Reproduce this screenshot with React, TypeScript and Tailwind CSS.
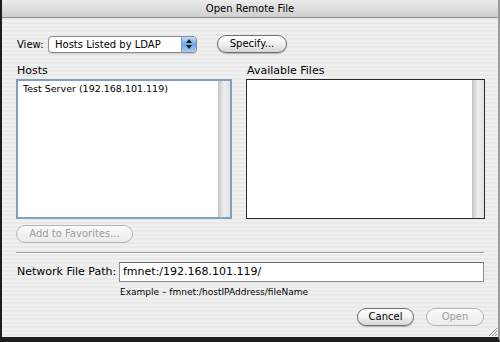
import React from "react";

const font = { fontFamily: '"DejaVu Sans", "Liberation Sans", sans-serif' };

type AquaButtonProps = {
    label: string;
    width: string;
    disabled?: boolean;
};

const AquaButton = ({ label, width, disabled }: AquaButtonProps) => (
    <button
        className={
            disabled
                ? `${width} h-[18px] block rounded-full border border-[#b4b4b4] bg-gradient-to-b from-[#fbfbfb] to-[#ebebeb] text-[10px] text-[#9c9c9c] leading-none`
                : `${width} h-[18px] block rounded-full border border-[#6e6e6e] bg-gradient-to-b from-[#ffffff] via-[#f1f1f1] to-[#d6d6d6] text-[10px] text-black leading-none shadow-[0_1px_1px_rgba(0,0,0,0.25)]`
        }
    >
        {label}
    </button>
);

const ListBox = ({
    width,
    focused,
    children,
}: {
    width: string;
    focused?: boolean;
    children?: React.ReactNode;
}) => (
    <div
        className={
            focused
                ? `${width} h-[140px] flex bg-white border-2 border-[#7f9fc4]`
                : `${width} h-[140px] flex bg-white border border-[#2a2a2a]`
        }
    >
        <div className="flex-1 pl-[5px] pt-[2px] text-[9.5px] leading-[12px]">{children}</div>
        <div className="w-[12px] bg-gradient-to-r from-[#c4c4c4] via-[#efefef] to-[#e2e2e2]" />
    </div>
);

export default function App() {
    return (
        <div
            style={font}
            className="relative w-[500px] h-[342px] flex flex-col border-l-2 border-r-2 border-b-[5px] border-[#1e1e1e] border-r-[#9a9a9a] bg-[repeating-linear-gradient(180deg,#f0f0f0_0px,#f0f0f0_2px,#e9e9e9_2px,#e9e9e9_4px)] text-black overflow-hidden"
        >
            <div className="h-[18px] shrink-0 flex items-center justify-center bg-gradient-to-b from-[#ececec] to-[#cfcfcf] border-b border-[#8f8f8f] text-[10px]">
                Open Remote File
            </div>

            <div className="flex flex-col pl-[14px] pr-[14px]">
                <div className="flex items-center mt-[17px] h-[18px]">
                    <span className="text-[10px] w-[32px] pl-[1px]">View:</span>
                    <div className="w-[149px] h-[17px] flex rounded-[4px] border border-[#8a8a8a] bg-white overflow-hidden shadow-[0_1px_1px_rgba(0,0,0,0.15)]">
                        <div className="flex-1 flex items-center pl-[6px] text-[10px]">Hosts Listed by LDAP</div>
                        <div className="w-[15px] flex flex-col items-center justify-center gap-[2px] bg-gradient-to-b from-[#c3dcf7] via-[#6fa6e6] to-[#a9cdf4] border-l border-[#7a9cc6]">
                            <svg width="6" height="4" viewBox="0 0 6 4">
                                <path d="M3 0 L6 4 L0 4 Z" fill="#1b1b1b" />
                            </svg>
                            <svg width="6" height="4" viewBox="0 0 6 4">
                                <path d="M0 0 L6 0 L3 4 Z" fill="#1b1b1b" />
                            </svg>
                        </div>
                    </div>
                    <div className="ml-[20px] flex">
                        <AquaButton label="Specify..." width="w-[70px]" />
                    </div>
                </div>

                <div className="flex gap-[14px] mt-[9px]">
                    <div className="flex flex-col">
                        <span className="text-[11px] leading-[17px] pl-[1px]">Hosts</span>
                        <ListBox width="w-[216px]" focused>
                            Test Server (192.168.101.119)
                        </ListBox>
                    </div>
                    <div className="flex flex-col">
                        <span className="text-[11px] leading-[17px] pl-[1px]">Available Files</span>
                        <ListBox width="w-[239px]" />
                    </div>
                </div>

                <div className="mt-[6px] flex">
                    <AquaButton label="Add to Favorites..." width="w-[117px]" disabled />
                </div>

                <div className="mt-[9px] h-[2px] w-[468px] border-t border-[#9b9b9b] bg-white" />

                <div className="flex items-center mt-[8px]">
                    <span className="text-[11px] w-[103px] pl-[1px]">Network File Path:</span>
                    <div className="w-[365px] h-[20px] flex items-center bg-white border border-[#8c8c8c] border-t-[#6b6b6b] pl-[3px] text-[11px]">
                        fmnet:/192.168.101.119/
                    </div>
                </div>

                <div className="pl-[104px] mt-[4px] text-[9px] leading-[12px]">
                    Example – fmnet:/hostIPAddress/fileName
                </div>

                <div className="flex justify-end gap-[12px] mt-[10px]">
                    <AquaButton label="Cancel" width="w-[57px]" />
                    <AquaButton label="Open" width="w-[58px]" disabled />
                </div>
            </div>

            <svg className="absolute right-[1px] bottom-[1px]" width="10" height="10" viewBox="0 0 10 10">
                <path d="M10 2 L2 10 M10 5 L5 10 M10 8 L8 10" stroke="#8a8a8a" strokeWidth="1" />
            </svg>
        </div>
    );
}
